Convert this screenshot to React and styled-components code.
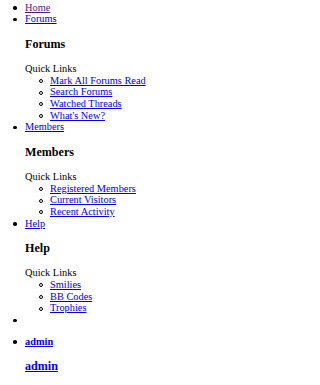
import React from 'react';
import styled, { createGlobalStyle } from 'styled-components';

const GlobalStyle = createGlobalStyle`
  body {
    margin: 0;
    background: #fff;
    font-family: "Liberation Serif", "Times New Roman", serif;
    font-size: 10.35px;
    line-height: 11.67px;
    color: #000;
  }
`;

const NavList = styled.ul`
  margin: 1.6px 0 0;
  padding-left: 25px;
  list-style: none;
`;

// disc marker drawn by hand so its distance to the text matches
const NavItem = styled.li`
  position: relative;
  min-height: ${(p) => (p.$empty ? '21.6px' : '11.67px')};

  &::before {
    content: '';
    position: absolute;
    left: -11.75px;
    top: 4.5px;
    width: 3.5px;
    height: 3.5px;
    border-radius: 50%;
    background: #000;
  }
`;

const Link = styled.a`
  color: ${(p) => (p.$visited ? '#551a8b' : '#0000ee')};
  text-decoration: underline;
  font-weight: ${(p) => (p.$bold ? 'bold' : 'inherit')};
  cursor: pointer;
`;

const MenuTitle = styled.h3`
  margin: 12px 0;
  font-size: 12.1px;
  line-height: 14px;
  font-weight: bold;
`;

const QuickLinks = styled.div``;

const SubList = styled.ul`
  margin: 0;
  padding-left: 25px;
  list-style: none;
`;

const SubItem = styled.li`
  position: relative;

  &::before {
    content: '';
    position: absolute;
    box-sizing: border-box;
    left: -11px;
    top: 4.3px;
    width: 4px;
    height: 4px;
    border: 1px solid #000;
    border-radius: 50%;
  }
`;

const menus = [
  {
    label: 'Forums',
    links: ['Mark All Forums Read', 'Search Forums', 'Watched Threads', "What's New?"],
  },
  {
    label: 'Members',
    links: ['Registered Members', 'Current Visitors', 'Recent Activity'],
  },
  {
    label: 'Help',
    links: ['Smilies', 'BB Codes', 'Trophies'],
  },
];

const App = () => (
  <>
    <GlobalStyle />
    <NavList>
      <NavItem>
        <Link $visited>Home</Link>
      </NavItem>
      {menus.map((menu) => (
        <NavItem key={menu.label}>
          <Link>{menu.label}</Link>
          <div>
            <MenuTitle>{menu.label}</MenuTitle>
            <QuickLinks>Quick Links</QuickLinks>
            <SubList>
              {menu.links.map((l) => (
                <SubItem key={l}>
                  <Link>{l}</Link>
                </SubItem>
              ))}
            </SubList>
          </div>
        </NavItem>
      ))}
      <NavItem $empty />
      <NavItem>
        <Link $bold>admin</Link>
        <MenuTitle>
          <Link>admin</Link>
        </MenuTitle>
      </NavItem>
    </NavList>
  </>
);

export default App;
